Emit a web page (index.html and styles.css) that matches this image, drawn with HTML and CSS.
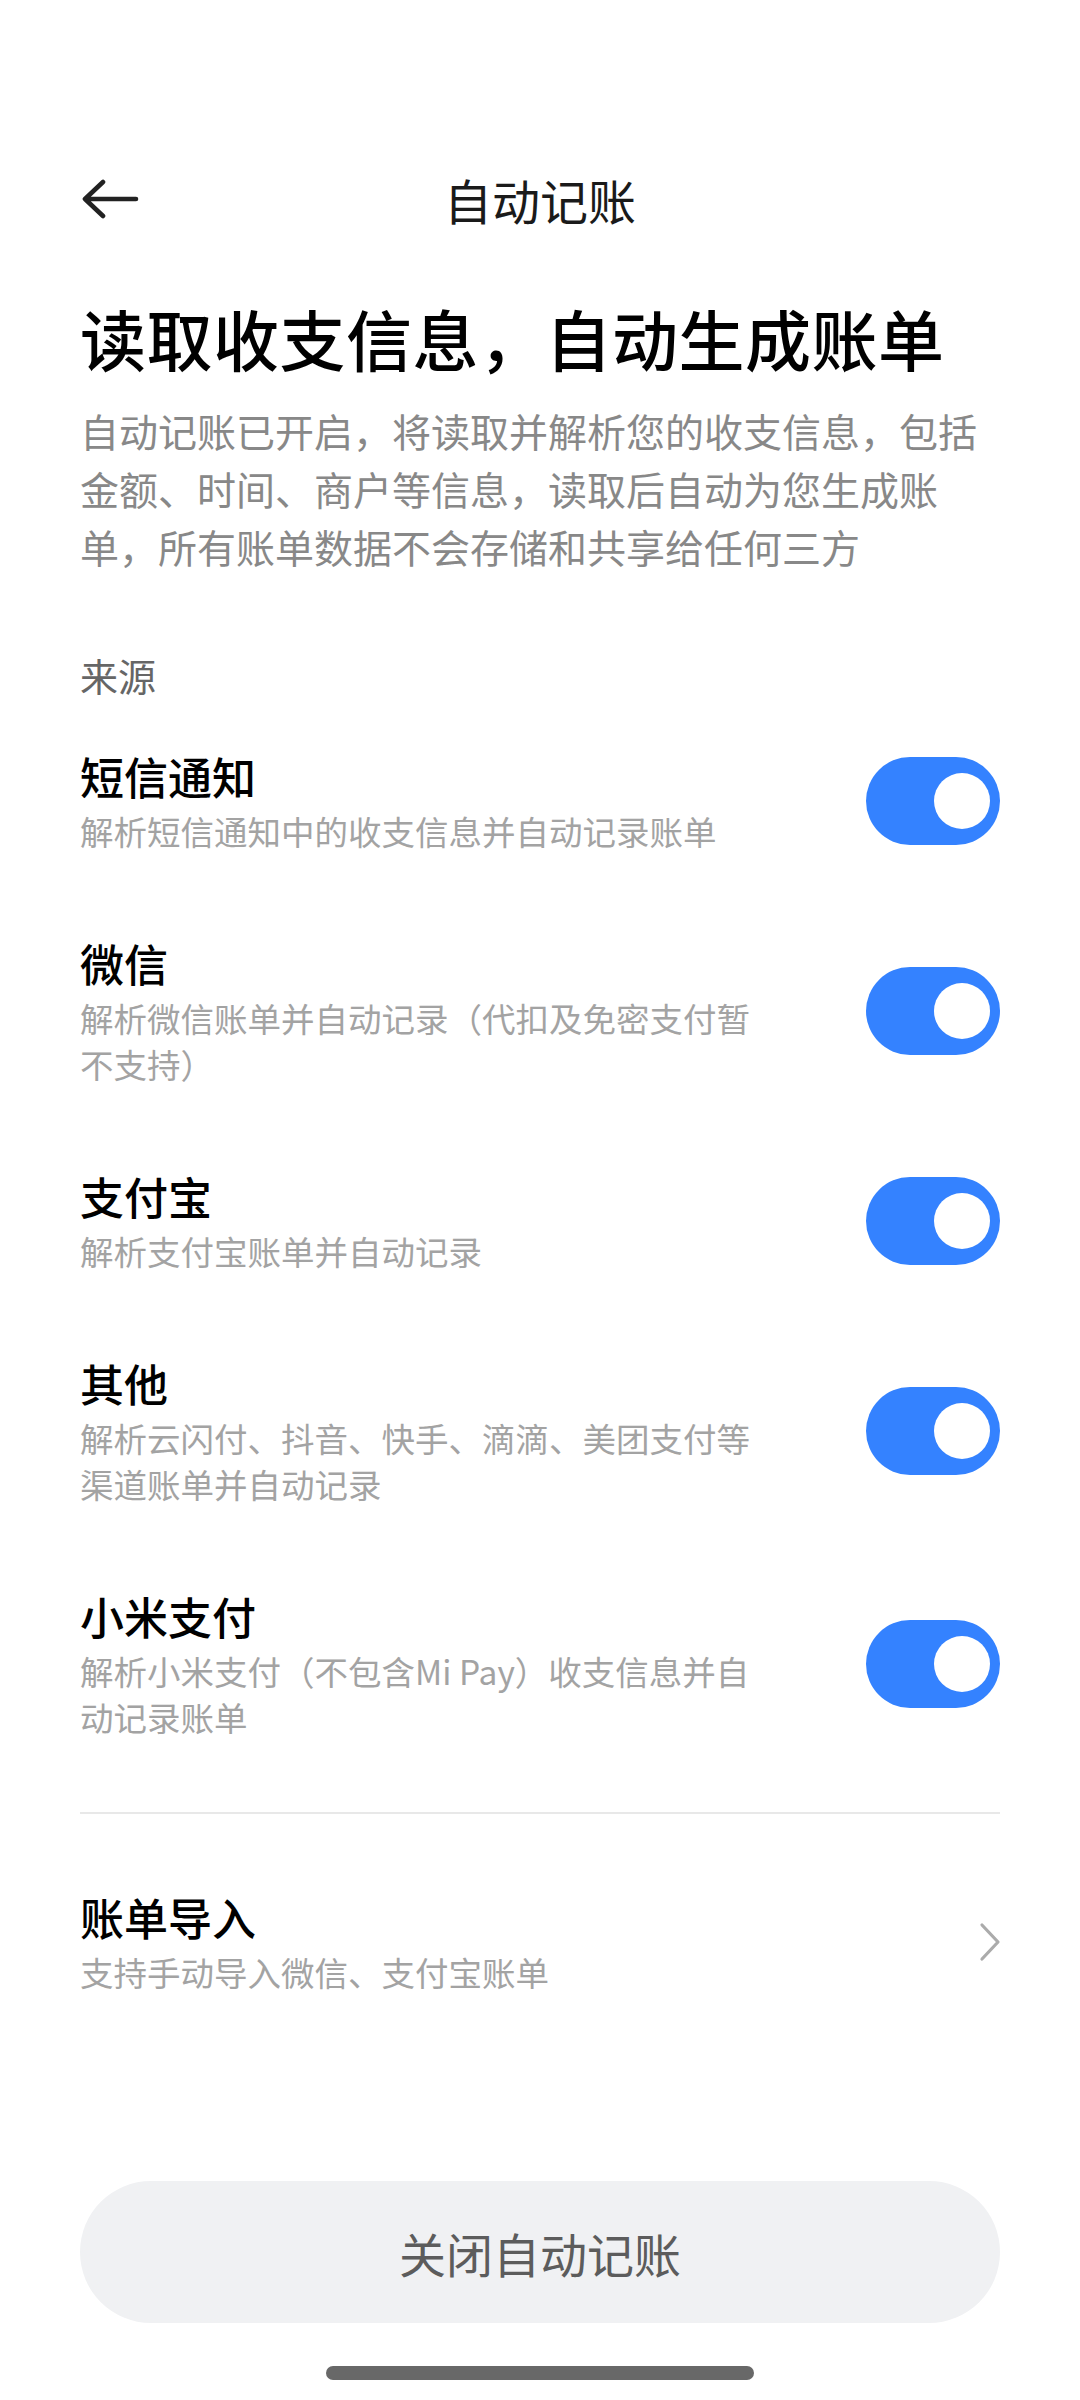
FILE: index.html
```html
<!DOCTYPE html>
<html lang="zh-CN">
<head>
<meta charset="utf-8">
<title>自动记账</title>
<link rel="stylesheet" href="styles.css">
</head>
<body>
<div class="page">
  <header class="topbar">
    <span class="back" aria-label="返回">
      <svg width="58" height="40" viewBox="0 0 58 40"><path d="M55 20 H5 M22 3 L4 20 L22 37" fill="none" stroke="#222" stroke-width="4.6" stroke-linecap="round" stroke-linejoin="round"/></svg>
    </span>
    <h1 class="title">自动记账</h1>
    <span></span>
  </header>

  <section class="intro">
    <h2 class="headline">读取收支信息，自动生成账单</h2>
    <p class="desc">自动记账已开启，将读取并解析您的收支信息，包括<br>金额、时间、商户等信息，读取后自动为您生成账<br>单，所有账单数据不会存储和共享给任何三方</p>
  </section>

  <section class="sources">
    <div class="section-label">来源</div>
    <ul class="list">
      <li class="item">
        <div class="item-text">
          <div class="item-title">短信通知</div>
          <div class="item-sub">解析短信通知中的收支信息并自动记录账单</div>
        </div>
        <span class="switch on"><span class="knob"></span></span>
      </li>
      <li class="item">
        <div class="item-text">
          <div class="item-title">微信</div>
          <div class="item-sub">解析微信账单并自动记录（代扣及免密支付暂<br>不支持）</div>
        </div>
        <span class="switch on"><span class="knob"></span></span>
      </li>
      <li class="item">
        <div class="item-text">
          <div class="item-title">支付宝</div>
          <div class="item-sub">解析支付宝账单并自动记录</div>
        </div>
        <span class="switch on"><span class="knob"></span></span>
      </li>
      <li class="item">
        <div class="item-text">
          <div class="item-title">其他</div>
          <div class="item-sub">解析云闪付、抖音、快手、滴滴、美团支付等<br>渠道账单并自动记录</div>
        </div>
        <span class="switch on"><span class="knob"></span></span>
      </li>
      <li class="item">
        <div class="item-text">
          <div class="item-title">小米支付</div>
          <div class="item-sub">解析小米支付（不包含Mi Pay）收支信息并自<br>动记录账单</div>
        </div>
        <span class="switch on"><span class="knob"></span></span>
      </li>
    </ul>
  </section>

  <div class="divider"></div>

  <div class="import-row">
    <div class="item-text">
      <div class="item-title">账单导入</div>
      <div class="item-sub">支持手动导入微信、支付宝账单</div>
    </div>
    <svg class="chev" width="24" height="40" viewBox="0 0 24 40"><path d="M4 3 L20 20 L4 37" fill="none" stroke="#ababab" stroke-width="3.2" stroke-linecap="round" stroke-linejoin="round"/></svg>
  </div>

  <div class="spacer"></div>

  <button class="close-btn">关闭自动记账</button>
  <div class="home-bar"></div>
</div>
</body>
</html>
```

FILE: styles.css
```css
* { box-sizing: border-box; }
html, body { margin: 0; padding: 0; background: #fff; }
body {
  font-family: "Noto Sans CJK SC", "Noto Sans", sans-serif;
  color: #000;
}
.page {
  width: 1080px;
  height: 2400px;
  padding: 0 80px;
  display: flex;
  flex-direction: column;
}
.topbar {
  margin-top: 129px;
  height: 140px;
  display: grid;
  grid-template-columns: 1fr auto 1fr;
  align-items: center;
}
.back { display: flex; align-items: center; margin-left: 1px; }
.title {
  margin: 0;
  font-size: 48px;
  font-weight: 400;
  line-height: 60px;
  color: #1a1a1a;
}
.intro { margin-top: 23px; }
.headline {
  margin: 0;
  font-size: 66px;
  line-height: 90px;
  font-weight: 500;
  letter-spacing: 0.5px;
  color: #000;
  white-space: nowrap;
}
.desc {
  margin: 19px 0 0;
  font-size: 39px;
  line-height: 58px;
  color: #888;
  white-space: nowrap;
}
.sources { margin-top: 75px; }
.section-label {
  font-size: 38px;
  line-height: 50px;
  color: #666;
  margin-bottom: 7px;
}
.list { list-style: none; margin: 0; padding: 0; }
.item {
  display: flex;
  align-items: center;
  justify-content: space-between;
  padding: 40px 0;
}
.item-text { display: flex; flex-direction: column; }
.item-title {
  font-size: 44px;
  line-height: 58px;
  font-weight: 500;
  color: #000;
}
.item-sub {
  margin-top: 3px;
  font-size: 33.5px;
  line-height: 46px;
  color: #a3a3a3;
  white-space: nowrap;
}
.switch {
  flex: none;
  width: 134px;
  height: 88px;
  border-radius: 44px;
  background: #3482ff;
  display: flex;
  align-items: center;
  justify-content: flex-end;
  padding-right: 10px;
}
.knob {
  width: 56px;
  height: 56px;
  border-radius: 50%;
  background: #fff;
}
.divider {
  margin-top: 32px;
  height: 2px;
  background: #e8e8e8;
}
.import-row {
  padding-top: 74px;
  display: flex;
  align-items: center;
  justify-content: space-between;
}
.chev { margin-right: -2px; }
.spacer { flex: 1; }
.close-btn {
  height: 142px;
  width: 100%;
  border: none;
  border-radius: 71px;
  background: #f0f1f3;
  font-family: "Noto Sans CJK SC", "Noto Sans", sans-serif;
  font-size: 47px;
  color: #5c5c5c;
  padding: 0;
  margin-bottom: 43px;
}
.home-bar {
  align-self: center;
  width: 428px;
  height: 14px;
  border-radius: 7px;
  background: #686868;
  margin-bottom: 20px;
}
```
